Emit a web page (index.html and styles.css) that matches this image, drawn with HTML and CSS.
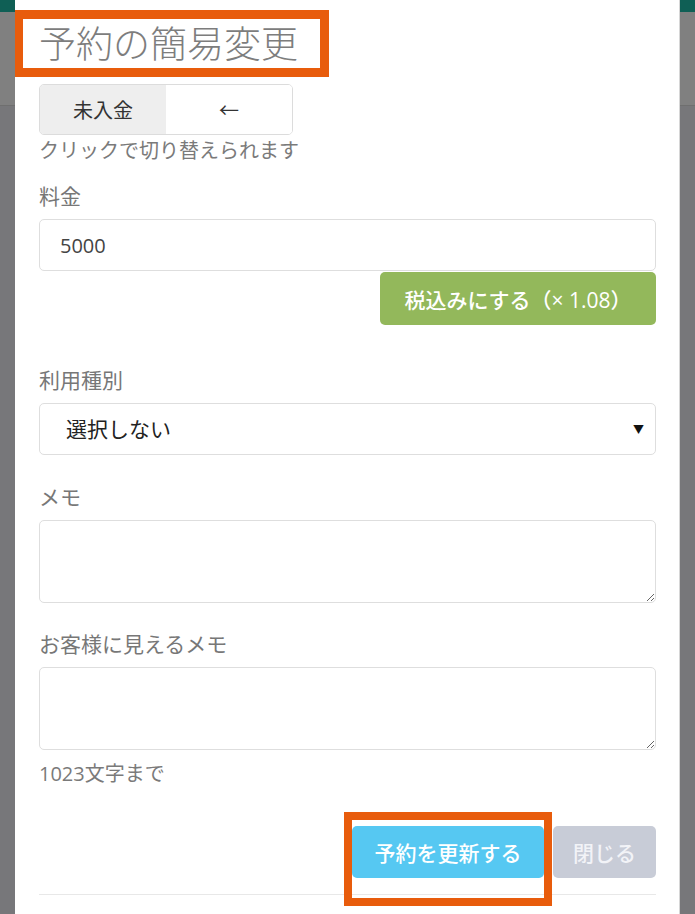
FILE: index.html
```html
<!DOCTYPE html>
<html>
<head>
    <meta charset="utf-8">
    <title>予約の簡易変更</title>
    <link rel="stylesheet" href="styles.css">
</head>
<body>
    <div class="modal">
        <h2 class="modal-title">予約の簡易変更</h2>

        <!-- 入金ステータス切り替え -->
        <div class="toggle-group">
            <button class="toggle active">未入金</button>
            <button class="toggle">←</button>
        </div>
        <p class="help first">クリックで切り替えられます</p>

        <div class="form-group price">
            <label for="price">料金</label>
            <input type="text" id="price" value="5000">
            <div class="tax-row">
                <button class="btn-tax">税込みにする（× 1.08）</button>
            </div>
        </div>

        <div class="form-group kind">
            <label for="kind">利用種別</label>
            <div class="select-wrap">
                <select id="kind">
                    <option>選択しない</option>
                </select>
            </div>
        </div>

        <div class="form-group memo">
            <label for="memo">メモ</label>
            <textarea id="memo"></textarea>
        </div>

        <div class="form-group memo">
            <label for="public-memo">お客様に見えるメモ</label>
            <textarea id="public-memo"></textarea>
        </div>
        <p class="help">1023文字まで</p>

        <div class="modal-footer">
            <span class="marked">
                <button class="btn-update">予約を更新する</button>
            </span>
            <button class="btn-close">閉じる</button>
        </div>
    </div>
</body>
</html>
```

FILE: styles.css
```css
body {
    margin: 0;
    font-family: "Open Sans", "Noto Sans CJK JP", sans-serif;
    background: linear-gradient(#0f5f55 0, #0f5f55 12px, #808080 12px, #808080 105px, #6f6f6f 105px, #6f6f6f 106px, #77777a 106px);
    min-height: 914px;
}
.modal {
    margin: 0 15px;
    min-height: 914px;
    padding: 10px 23px 0 24px;
    box-sizing: border-box;
    background-color: #fff;
    border-right: 1px solid #d6d6d6;
    overflow: hidden;
}
.modal-title {
    display: inline-block;
    margin: 0 0 0 -25px;
    padding: 0 22px 0 16px;
    height: 49px;
    line-height: 49px;
    border: 9px solid #e85c0c;
    font-size: 37px;
    font-weight: 300;
    color: #7d7d7d;
}
.toggle-group {
    display: flex;
    width: 252px;
    margin-top: 7px;
    border: 1px solid #dcdcdc;
    border-radius: 5px;
    overflow: hidden;
}
.toggle {
    flex: 1;
    height: 49px;
    border: none;
    background-color: #fff;
    font-family: inherit;
    font-size: 20px;
    color: #333;
    padding: 0;
}
.toggle.active {
    background-color: #eeeeee;
}
.help {
    margin: 0;
    line-height: 24px;
    font-size: 20px;
    color: #7a7a7a;
}
.help.first {
    margin-top: 4px;
}
.form-group label {
    display: block;
    line-height: 24px;
    margin-bottom: 11px;
    font-size: 21px;
    color: #777;
}
.price {
    margin-top: 21px;
}
.kind {
    margin-top: 43px;
}
.memo {
    margin-top: 30px;
}
.memo + .memo {
    margin-top: 29px;
}
.memo + .help {
    margin-top: 12px;
}
input,
select,
textarea {
    display: block;
    width: 100%;
    box-sizing: border-box;
    border: 1px solid #dedede;
    border-radius: 5px;
    background-color: #fff;
    font-family: inherit;
    font-size: 20px;
    color: #444;
    outline: none;
}
input {
    height: 52px;
    padding: 0 20px;
}
.tax-row {
    display: flex;
    justify-content: flex-end;
    margin-top: 1px;
}
.btn-tax {
    width: 276px;
    height: 53px;
    border: none;
    border-radius: 5px;
    background-color: #93b85b;
    color: #fff;
    font-family: inherit;
    font-size: 21px;
    font-weight: 500;
}
.select-wrap {
    position: relative;
}
.select-wrap::after {
    content: "▼";
    position: absolute;
    right: 12px;
    top: 18px;
    font-size: 11px;
    color: #111;
    pointer-events: none;
}
select {
    -webkit-appearance: none;
    appearance: none;
    height: 52px;
    padding: 0 26px;
    font-size: 21px;
    color: #222;
}
textarea {
    height: 83px;
    resize: vertical;
}
.modal-footer {
    display: flex;
    justify-content: flex-end;
    gap: 9px;
    margin-top: 40px;
    padding-bottom: 16px;
    border-bottom: 1px solid #e8e8e8;
}
.marked {
    position: relative;
    display: flex;
}
/* 注目用の枠 */
.marked::after {
    content: "";
    position: absolute;
    top: -14px;
    left: -8px;
    right: -8px;
    bottom: -28px;
    border: 8px solid #e85c0c;
}
.btn-update,
.btn-close {
    height: 52px;
    border: none;
    border-radius: 5px;
    color: #fff;
    font-family: inherit;
    font-size: 21px;
    font-weight: 500;
}
.btn-update {
    width: 192px;
    background-color: #56c8f2;
}
.btn-close {
    width: 103px;
    background-color: #c8ccd7;
    color: #f2f3f7;
}
```
